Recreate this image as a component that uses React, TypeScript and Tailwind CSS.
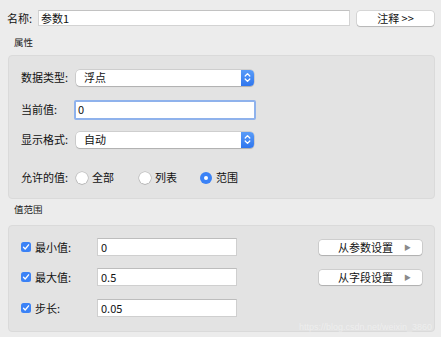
import React from "react";

const font = { fontFamily: '"Noto Sans CJK SC", "Noto Sans", sans-serif' };

function Select({ value }: { value: string }) {
  return (
    <div className="flex h-[16px] w-[178px] items-stretch rounded-[4px] bg-white shadow-[0_0_0_0.5px_rgba(0,0,0,0.18),0_1px_1px_rgba(0,0,0,0.15)]">
      <div className="flex flex-1 items-center pl-[8px] text-[11px] leading-none text-[#111]">{value}</div>
      <div className="flex w-[13px] items-center justify-center rounded-r-[4px] bg-gradient-to-b from-[#5a9cf8] to-[#2f76ee]">
        <svg width="7" height="11" viewBox="0 0 7 11" fill="none" stroke="white" strokeWidth="1.3" strokeLinecap="round" strokeLinejoin="round">
          <path d="M1.2 4 L3.5 1.6 L5.8 4" />
          <path d="M1.2 7 L3.5 9.4 L5.8 7" />
        </svg>
      </div>
    </div>
  );
}

function Radio({ checked, label }: { checked?: boolean; label: string }) {
  return (
    <div className="flex items-center">
      {checked ? (
        <div className="flex h-[12px] w-[12px] items-center justify-center rounded-full bg-[#3b82f6]">
          <div className="h-[4px] w-[4px] rounded-full bg-white" />
        </div>
      ) : (
        <div className="h-[12px] w-[12px] rounded-full bg-white shadow-[0_0_0_0.5px_rgba(0,0,0,0.22),0_0.5px_1px_rgba(0,0,0,0.2)]" />
      )}
      <span className="ml-[4px] text-[11px] leading-none text-[#111]">{label}</span>
    </div>
  );
}

function Check() {
  return (
    <div className="flex h-[10px] w-[10px] items-center justify-center rounded-[2.5px] bg-[#3b82f6]">
      <svg width="8" height="8" viewBox="0 0 8 8" fill="none" stroke="white" strokeWidth="1.3" strokeLinecap="round" strokeLinejoin="round">
        <path d="M1.5 4.2 L3.2 6 L6.6 1.8" />
      </svg>
    </div>
  );
}

function TextBox({ value, w }: { value: string; w: string }) {
  return (
    <div className={`flex h-[18px] ${w} items-center border border-[#cfcfcf] border-t-[#bdbdbd] bg-white pl-[3px] text-[11px] leading-none text-[#111]`}>
      {value}
    </div>
  );
}

function MenuButton({ label }: { label: string }) {
  return (
    <div className="flex h-[15px] w-[103px] items-center rounded-[3px] bg-white pl-[19px] shadow-[0_0_0_0.5px_rgba(0,0,0,0.18),0_1px_1px_rgba(0,0,0,0.15)]">
      <span className="text-[11px] leading-none text-[#111]">{label}</span>
      <span className="ml-auto mr-[11px] text-[7px] leading-none text-[#8a8a8a]">▶</span>
    </div>
  );
}

export default function App() {
  return (
    <div className="relative h-[337px] w-[441px] overflow-hidden bg-[#ececec]" style={font}>
      {/* top row */}
      <div className="flex items-center pl-[7px] pt-[10px]">
        <span className="w-[31px] text-[11px] leading-none text-[#111]">名称:</span>
        <div className="flex h-[16px] w-[312px] items-center border border-[#d3d3d3] border-t-[#c2c2c2] bg-white pl-[2px] text-[11px] leading-none text-[#111]">
          参数1
        </div>
        <div className="ml-[7px] flex h-[15px] w-[77px] items-center justify-center rounded-[3px] bg-white text-[11px] leading-none text-[#111] shadow-[0_0_0_0.5px_rgba(0,0,0,0.18),0_1px_1px_rgba(0,0,0,0.15)]">
          注释 &gt;&gt;
        </div>
      </div>

      <div className="ml-[14px] mt-[12px] text-[9.5px] leading-none text-[#222]">属性</div>

      {/* panel 1 */}
      <div className="ml-[8px] mt-[7px] h-[144px] w-[427px] rounded-[4px] border border-[#dadada] bg-[#e3e3e3] pl-[12px] pt-[14px]">
        <div className="flex h-[16px] items-center">
          <span className="w-[55px] text-[11px] leading-none text-[#111]">数据类型:</span>
          <Select value="浮点" />
        </div>
        <div className="mt-[14px] flex h-[20px] items-center">
          <span className="w-[53px] text-[11px] leading-none text-[#111]">当前值:</span>
          <div className="flex h-[20px] w-[182px] items-center rounded-[2px] border-[2px] border-[#8fb2ec] bg-white pl-[2px] text-[11px] leading-none text-[#111]">
            0
          </div>
        </div>
        <div className="mt-[12px] flex h-[16px] items-center">
          <span className="w-[55px] text-[11px] leading-none text-[#111]">显示格式:</span>
          <Select value="自动" />
        </div>
        <div className="mt-[22px] flex h-[16px] items-center">
          <span className="w-[55px] text-[11px] leading-none text-[#111]">允许的值:</span>
          <div className="w-[63px]">
            <Radio label="全部" />
          </div>
          <div className="w-[61px]">
            <Radio label="列表" />
          </div>
          <Radio checked label="范围" />
        </div>
      </div>

      <div className="ml-[14px] mt-[6px] text-[9.5px] leading-none text-[#222]">值范围</div>

      {/* panel 2 */}
      <div className="ml-[8px] mt-[11px] h-[107px] w-[427px] rounded-[4px] border border-[#dadada] bg-[#e3e3e3] pl-[12px] pr-[12px] pt-[12px]">
        <div className="flex h-[18px] items-center">
          <Check />
          <span className="ml-[4px] w-[62px] text-[11px] leading-none text-[#111]">最小值:</span>
          <TextBox value="0" w="w-[140px]" />
          <div className="ml-auto">
            <MenuButton label="从参数设置" />
          </div>
        </div>
        <div className="mt-[12px] flex h-[18px] items-center">
          <Check />
          <span className="ml-[4px] w-[62px] text-[11px] leading-none text-[#111]">最大值:</span>
          <TextBox value="0.5" w="w-[140px]" />
          <div className="ml-auto">
            <MenuButton label="从字段设置" />
          </div>
        </div>
        <div className="mt-[13px] flex h-[18px] items-center">
          <Check />
          <span className="ml-[4px] w-[62px] text-[11px] leading-none text-[#111]">步长:</span>
          <TextBox value="0.05" w="w-[140px]" />
        </div>
      </div>

      <div className="absolute bottom-[5px] right-[9px] text-[9px] leading-none text-white/40" style={{ fontFamily: '"Liberation Sans", sans-serif' }}>
        https://blog.csdn.net/weixin_3860
      </div>
    </div>
  );
}
